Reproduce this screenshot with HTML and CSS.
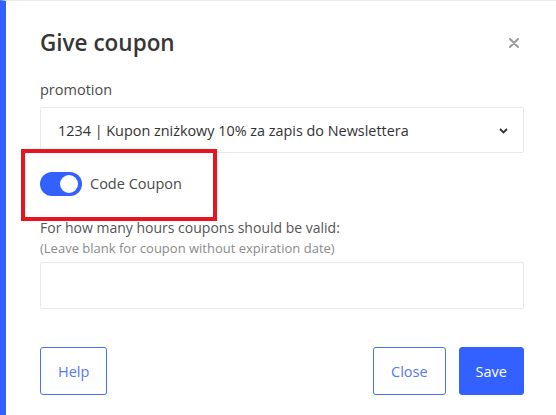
FILE: index.html
```html
<!DOCTYPE html>
<html lang="en">
<head>
<meta charset="utf-8">
<title>Give coupon</title>
<link rel="stylesheet" href="styles.css">
</head>
<body>
<div class="modal">
  <div class="header">
    <h2 class="title">Give coupon</h2>
    <button class="close-x" aria-label="Close">
      <svg width="10" height="10" viewBox="0 0 10 10"><path d="M1 1 L9 9 M9 1 L1 9" stroke="#9a9a9a" stroke-width="2" stroke-linecap="round"/></svg>
    </button>
  </div>
  <div class="body">
    <label class="label">promotion</label>
    <div class="select">
      <span>1234 | Kupon zniżkowy 10% za zapis do Newslettera</span>
      <svg class="chev" width="9" height="6" viewBox="0 0 9 6"><path d="M1 1 L4.5 4.5 L8 1" fill="none" stroke="#333" stroke-width="1.8"/></svg>
    </div>
    <div class="switch-row">
      <span class="switch"><span class="knob"></span></span>
      <span class="switch-label">Code Coupon</span>
      <div class="highlight"></div>
    </div>
    <div class="label2">For how many hours coupons should be valid:</div>
    <div class="hint">(Leave blank for coupon without expiration date)</div>
    <div class="input"></div>
  </div>
  <div class="footer">
    <button class="btn btn-outline">Help</button>
    <div class="spacer"></div>
    <button class="btn btn-outline btn-close">Close</button>
    <button class="btn btn-primary">Save</button>
  </div>
</div>
</body>
</html>
```
FILE: styles.css
```css
* { box-sizing: border-box; }
html, body {
  margin: 0;
  padding: 0;
  background: #fff;
  font-family: "Open Sans", "Noto Sans", sans-serif;
}
.modal {
  width: 556px;
  height: 415px;
  border-left: 6px solid #3361ff;
  border-top: 1px solid #ececec;
  padding: 0 32px 0 34px;
  display: flex;
  flex-direction: column;
  position: relative;
}
.header {
  display: flex;
  align-items: center;
  justify-content: space-between;
  padding-top: 26px;
  height: 57px;
}
.title {
  margin: 0;
  font-size: 22.5px;
  font-weight: 600;
  color: #363636;
  line-height: 30px;
}
.close-x {
  border: 0;
  background: none;
  padding: 0;
  margin-right: 5px;
  margin-top: 1px;
  display: flex;
}
.body {
  display: flex;
  flex-direction: column;
}
.label {
  margin-top: 22px;
  font-size: 14.5px;
  line-height: 20px;
  color: #4a4a4a;
}
.select {
  margin-top: 7px;
  height: 46px;
  border: 1px solid #e6e9f1;
  border-radius: 2px;
  display: flex;
  align-items: center;
  justify-content: space-between;
  padding: 0 15px 0 17px;
  font-size: 14.4px;
  color: #333;
}
.chev { margin-top: 1px; }
.switch-row {
  position: relative;
  margin-top: 18px;
  display: flex;
  align-items: center;
  height: 25px;
}
.switch {
  width: 42px;
  height: 24px;
  border-radius: 12px;
  background: #3361ff;
  position: relative;
  display: inline-block;
}
.knob {
  position: absolute;
  right: 4px;
  top: 3px;
  width: 18px;
  height: 18px;
  border-radius: 50%;
  background: #fff;
}
.switch-label {
  margin-left: 8px;
  font-size: 14.5px;
  color: #4a4a4a;
}
.highlight {
  position: absolute;
  left: -19px;
  top: -22px;
  width: 196px;
  height: 72px;
  border: 4px solid #e8141f;
}
.label2 {
  margin-top: 22px;
  font-size: 14px;
  line-height: 20px;
  color: #555;
}
.hint {
  margin-top: 1px;
  font-size: 13px;
  line-height: 18px;
  color: #8a8a8a;
}
.input {
  margin-top: 5px;
  height: 47px;
  border: 1px solid #e6e9f1;
  border-radius: 2px;
}
.footer {
  margin-top: 38px;
  display: flex;
  align-items: center;
}
.spacer { flex: 1; }
.btn {
  height: 48px;
  border-radius: 3px;
  font-family: inherit;
  font-size: 14.5px;
  padding: 0 17px;
  cursor: pointer;
}
.btn-outline {
  background: #fff;
  border: 1px solid #4a70f7;
  color: #5577f5;
}
.btn-close {
  margin-right: 13px;
}
.btn-primary {
  background: #3361ff;
  border: 1px solid #3361ff;
  color: #fff;
  padding: 0 16px;
}
```
